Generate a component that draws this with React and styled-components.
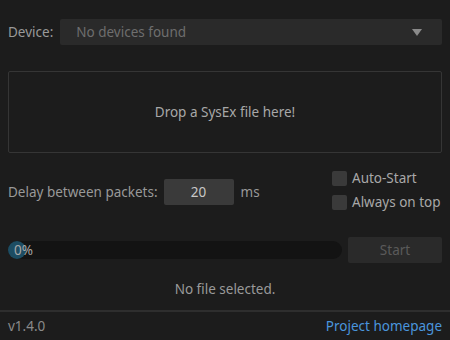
import styled, { createGlobalStyle } from "styled-components";

const GlobalStyle = createGlobalStyle`
  html, body {
    margin: 0;
    padding: 0;
    background: #1c1c1c;
  }
  body {
    font-family: "Noto Sans", "DejaVu Sans", sans-serif;
    font-size: 13.5px;
    color: #9a9a9a;
  }
`;

const Window = styled.div`
  width: 450px;
  height: 340px;
  box-sizing: border-box;
  display: flex;
  flex-direction: column;
  background: #1c1c1c;
`;

const Main = styled.div`
  flex: 1;
  display: flex;
  flex-direction: column;
  padding: 19px 8px 0 8px;
`;

const DeviceRow = styled.div`
  display: flex;
  align-items: center;
  gap: 7px;
  height: 26px;
`;

const Label = styled.span`
  color: #999;
  white-space: nowrap;
`;

const Select = styled.div`
  flex: 1;
  height: 26px;
  display: flex;
  align-items: center;
  justify-content: space-between;
  padding: 0 20px 0 16px;
  background: #2a2a2a;
  border-radius: 2px;
  color: #6e6e6e;
`;

const Arrow = styled.span`
  width: 0;
  height: 0;
  border-left: 5px solid transparent;
  border-right: 5px solid transparent;
  border-top: 7px solid #8a8a8a;
`;

const DropZone = styled.div`
  margin-top: 26px;
  height: 82px;
  box-sizing: border-box;
  border: 1px solid #353535;
  border-radius: 2px;
  display: flex;
  align-items: center;
  justify-content: center;
  color: #a8a8a8;
`;

const OptionsRow = styled.div`
  margin-top: 18px;
  height: 39px;
  display: flex;
  justify-content: space-between;
  align-items: center;
`;

const DelayGroup = styled.div`
  display: flex;
  align-items: center;
  gap: 6px;
  margin-top: 3px;
`;

const NumberBox = styled.div`
  width: 70px;
  height: 26px;
  background: #3a3a3a;
  border-radius: 2px;
  display: flex;
  align-items: center;
  justify-content: center;
  color: #c8c8c8;
  margin-right: 1px;
`;

const Checks = styled.div`
  display: flex;
  flex-direction: column;
  gap: 9px;
  width: 110px;
`;

const CheckRow = styled.label`
  display: flex;
  align-items: center;
  gap: 5px;
  color: #a8a8a8;
  line-height: 15px;
  white-space: nowrap;
`;

const Box = styled.span`
  flex: none;
  width: 15px;
  height: 15px;
  background: #3a3a3a;
  border-radius: 2px;
`;

const ProgressRow = styled.div`
  margin-top: 27px;
  display: flex;
  align-items: center;
  gap: 6px;
`;

const Track = styled.div`
  position: relative;
  flex: 1;
  height: 18px;
  background: #131313;
  border-radius: 9px;
  display: flex;
  align-items: center;
`;

const Knob = styled.span`
  position: absolute;
  left: 0;
  top: 0;
  width: 18px;
  height: 18px;
  border-radius: 50%;
  background: #1d4d63;
`;

const Percent = styled.span`
  position: relative;
  padding-left: 6px;
  color: #a8a8a8;
`;

const StartButton = styled.button`
  width: 94px;
  height: 26px;
  border: none;
  border-radius: 2px;
  background: #2a2a2a;
  color: #5a5a5a;
  font: inherit;
  padding: 0;
`;

const Status = styled.div`
  margin-top: 17px;
  line-height: 19px;
  text-align: center;
  color: #9a9a9a;
`;

const Footer = styled.div`
  border-top: 2px solid #2e2e2e;
  height: 28px;
  padding: 0 8px;
  display: flex;
  align-items: center;
  justify-content: space-between;
`;

const Version = styled.span`
  color: #8a8a8a;
`;

const Link = styled.a`
  color: #4a95dc;
  text-decoration: none;
`;

export default function App() {
  return (
    <>
      <GlobalStyle />
      <Window>
        <Main>
          <DeviceRow>
            <Label>Device:</Label>
            <Select>
              <span>No devices found</span>
              <Arrow />
            </Select>
          </DeviceRow>
          <DropZone>Drop a SysEx file here!</DropZone>
          <OptionsRow>
            <DelayGroup>
              <Label>Delay between packets:</Label>
              <NumberBox>20</NumberBox>
              <Label>ms</Label>
            </DelayGroup>
            <Checks>
              <CheckRow>
                <Box />
                Auto-Start
              </CheckRow>
              <CheckRow>
                <Box />
                Always on top
              </CheckRow>
            </Checks>
          </OptionsRow>
          <ProgressRow>
            <Track>
              <Knob />
              <Percent>0%</Percent>
            </Track>
            <StartButton>Start</StartButton>
          </ProgressRow>
          <Status>No file selected.</Status>
        </Main>
        <Footer>
          <Version>v1.4.0</Version>
          <Link href="#">Project homepage</Link>
        </Footer>
      </Window>
    </>
  );
}
